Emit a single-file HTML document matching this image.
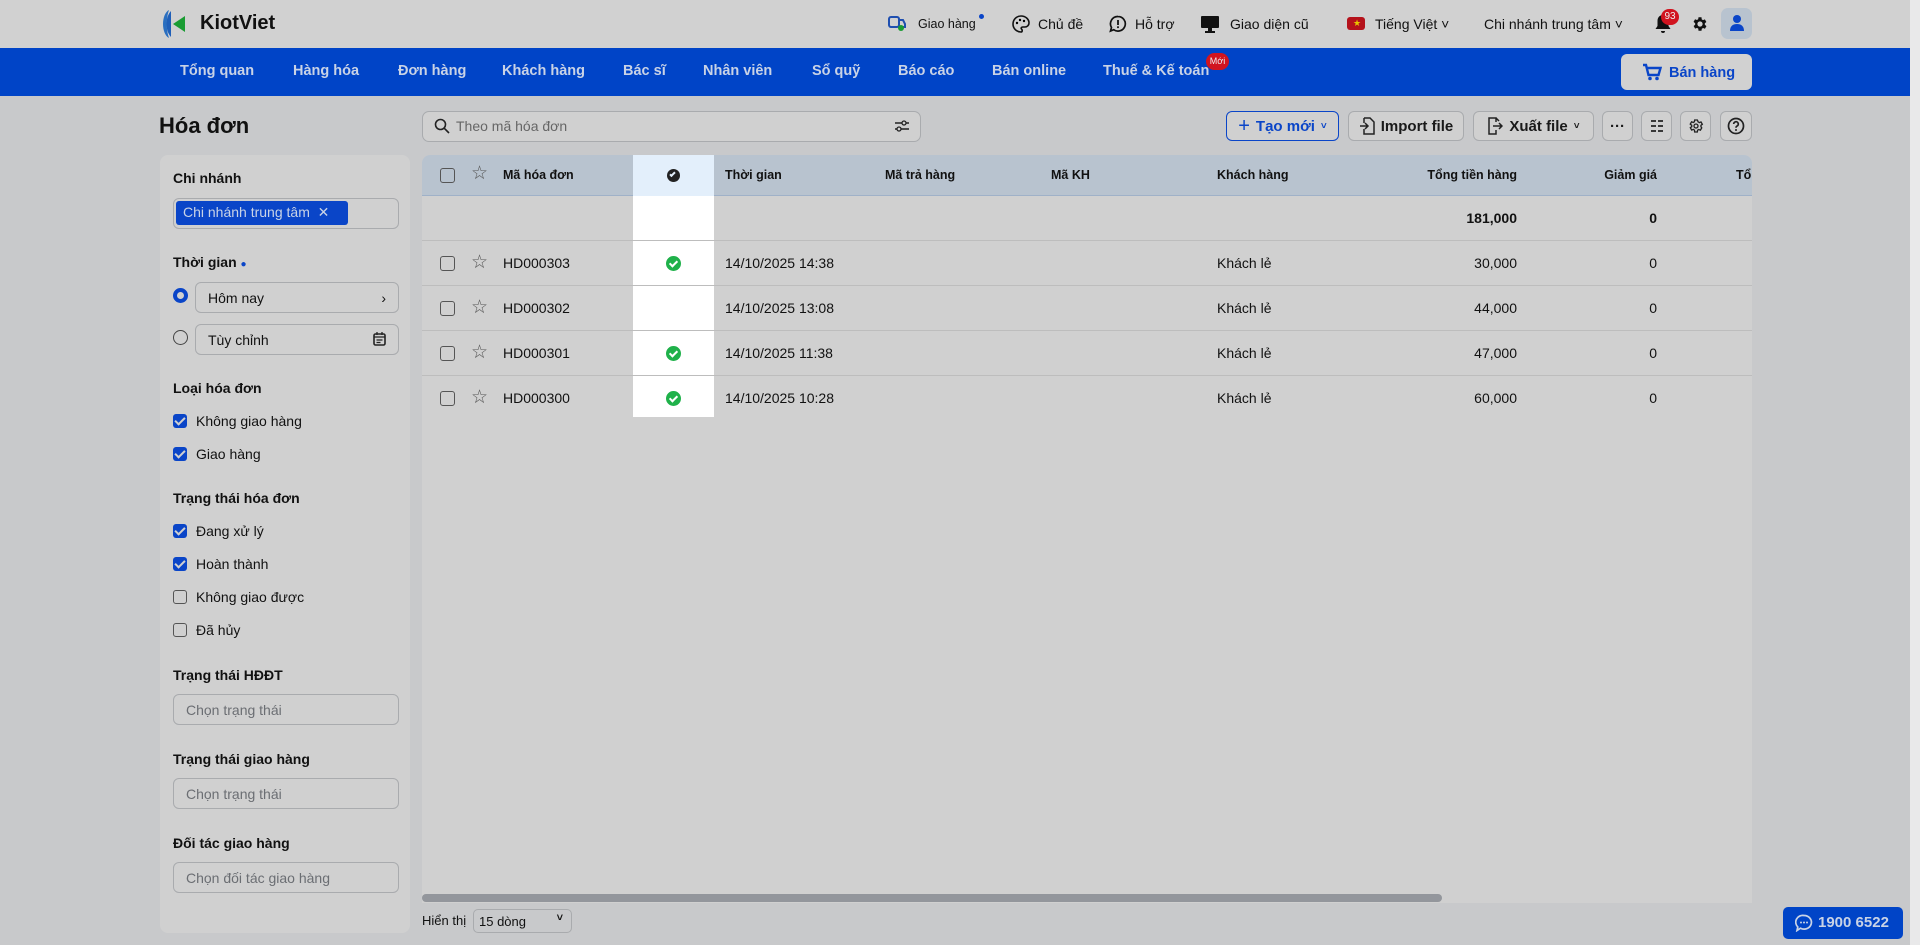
<!DOCTYPE html>
<html><head><meta charset="utf-8"><style>
*{box-sizing:border-box;margin:0;padding:0}
body{width:1920px;height:945px;overflow:hidden;background:#c8c9cb;font-family:"Liberation Sans",Arial,sans-serif;color:#111;position:relative;font-size:14px}
.a{position:absolute}
.top{left:0;top:0;width:1910px;height:48px;background:#d1d1d1}
.nav{left:0;top:48px;width:1910px;height:48px;background:#0044c7}
.nav span{position:absolute;top:15px;color:#c9d3e6;font-size:14.5px;font-weight:bold}
.strip{left:1910px;top:0;width:10px;height:945px;background:#e9e9ea}
.tt{font-size:14px;color:#111;top:16px}
.btn{border:1px solid #a9abae;border-radius:6px;height:30px;top:111px;background:#d0d0d0;font-size:15px;font-weight:bold;color:#1a1a1a;display:flex;align-items:center;justify-content:center;gap:6px}
.side{left:160px;top:155px;width:250px;height:778px;background:#d0d0d0;border-radius:8px}
.lab{left:13px;font-size:14px;font-weight:bold}
.inp{left:13px;width:226px;height:31px;border:1px solid #a9abae;border-radius:6px;color:#6b6e73;font-size:14px;padding:7px 12px}
.cb{left:13px;width:14px;height:14px;border-radius:3px;background:#0a45c8}
.cb:after{content:"";position:absolute;left:4px;top:1px;width:4px;height:8px;border:solid #d0d0d0;border-width:0 2px 2px 0;transform:rotate(45deg)}
.ce{left:13px;width:14px;height:14px;border-radius:3px;border:1.5px solid #555}
.ct{left:36px;font-size:14px}
.tbl{left:422px;top:155px;width:1330px;height:748px;background:#d0d0d0;border-radius:8px 8px 0 0;overflow:hidden}
.hd{left:0;top:0;width:1330px;height:41px;background:#b8c3cf;border-bottom:1px solid #9fb1c8}
.h{top:13px;font-size:12.5px;font-weight:bold}
.row{left:0;width:1330px;height:45px;border-bottom:1px solid #bdbdbd}
.row span{position:absolute;top:14px;font-size:14px}
.hl{left:211px;top:0;width:81px;height:262px;background:#fff}
.chk{width:15px;height:15px;border-radius:50%;background:#1fb14a;left:33px;top:15px}
.chk:after{content:"";position:absolute;left:5px;top:3px;width:3px;height:6px;border:solid #fff;border-width:0 2px 2px 0;transform:rotate(45deg)}
.rb{width:15px;height:15px;border:1.5px solid #555;border-radius:3px;left:18px;top:15px}
.st{left:49px;top:10px;font-size:19px;color:#555}
</style></head><body>
<div class="a top"></div>
<div class="a strip"></div>
<svg class="a" style="left:159px;top:8px" width="34" height="32" viewBox="0 0 34 32"><path d="M10 2 C2 6 2 26 10 30 C7 22 7 10 10 2Z" fill="#2a6fc0"/><path d="M12 3 C6 9 6 23 12 29 Z" fill="#1f5fb8"/><path d="M26 8 L14 16 L26 24Z" fill="#1a9c33"/></svg>
<div class="a" style="left:200px;top:12px;font-size:20px;font-weight:bold;color:#111">KiotViet</div>
<svg class="a" style="left:887px;top:14px" width="20" height="18" viewBox="0 0 20 18"><rect x="2" y="3" width="10" height="10" rx="2" fill="none" stroke="#1f4fb0" stroke-width="2"/><path d="M12 6h4l2 4v3h-6z" fill="none" stroke="#1f4fb0" stroke-width="2"/><circle cx="14" cy="14" r="3" fill="#1a9c33"/></svg>
<div class="a" style="left:918px;top:17px;font-size:12.5px">Giao hàng</div>
<div class="a" style="left:979px;top:14px;width:5px;height:5px;border-radius:50%;background:#0a45c8"></div>
<svg class="a" style="left:1012px;top:15px" width="18" height="18" viewBox="0 0 18 18"><path d="M9 1a8 8 0 1 0 0 16c1.5 0 1.5-2 .5-3-.8-.9 0-2 1.2-2H13a4 4 0 0 0 4-4c0-4-3.6-7-8-7z" fill="none" stroke="#111" stroke-width="1.6"/><circle cx="5" cy="8" r="1.2"/><circle cx="8" cy="5" r="1.2"/><circle cx="12" cy="6" r="1.2"/></svg>
<div class="a tt" style="left:1038px">Chủ đề</div>
<svg class="a" style="left:1109px;top:15px" width="18" height="18" viewBox="0 0 18 18"><path d="M9 1.5a7.3 7.3 0 1 1-4.3 13.2L1.5 16l1-3.5A7.3 7.3 0 0 1 9 1.5z" fill="none" stroke="#111" stroke-width="1.7"/><rect x="8.1" y="5" width="1.8" height="5" fill="#111"/><rect x="8.1" y="11.3" width="1.8" height="1.8" fill="#111"/></svg>
<div class="a tt" style="left:1135px">Hỗ trợ</div>
<svg class="a" style="left:1200px;top:14px" width="20" height="20" viewBox="0 0 20 20"><rect x="1" y="2" width="18" height="12" rx="1" fill="#111"/><rect x="8" y="14" width="4" height="3" fill="#111"/><rect x="5" y="17" width="10" height="2" fill="#111"/></svg>
<div class="a tt" style="left:1230px">Giao diện cũ</div>
<div class="a" style="left:1347px;top:17px;width:18px;height:13px;border-radius:3px;background:#b5121b"></div>
<div class="a" style="left:1353px;top:18px;color:#e8c500;font-size:9px">★</div>
<div class="a tt" style="left:1375px">Tiếng Việt ˅</div>
<div class="a tt" style="left:1484px">Chi nhánh trung tâm ˅</div>
<svg class="a" style="left:1654px;top:14px" width="18" height="20" viewBox="0 0 18 20"><path d="M9 1c-3.5 0-5.5 2.5-5.5 6v5L1.5 15h15l-2-3V7C14.5 3.5 12.5 1 9 1z" fill="#111"/><path d="M7 17a2 2 0 0 0 4 0z" fill="#111"/></svg>
<div class="a" style="left:1661px;top:9px;width:18px;height:16px;border-radius:8px;background:#d1141f;color:#eee;font-size:10px;text-align:center;line-height:16px">93</div>
<svg class="a" style="left:1691px;top:15px" width="18" height="18" viewBox="0 0 24 24"><path fill="#111" d="M19.4 13a7.5 7.5 0 0 0 0-2l2.1-1.6-2-3.5-2.5 1a7.5 7.5 0 0 0-1.7-1L15 3h-4l-.4 2.7a7.5 7.5 0 0 0-1.7 1l-2.5-1-2 3.5L6.6 11a7.5 7.5 0 0 0 0 2l-2.1 1.6 2 3.5 2.5-1a7.5 7.5 0 0 0 1.7 1L11 21h4l.4-2.7a7.5 7.5 0 0 0 1.7-1l2.5 1 2-3.5zM13 15.5a3.5 3.5 0 1 1 0-7 3.5 3.5 0 0 1 0 7z" transform="translate(-1 0)"/></svg>
<div class="a" style="left:1721px;top:8px;width:31px;height:31px;border-radius:7px;background:#b8c3cf"></div>
<svg class="a" style="left:1729px;top:14px" width="16" height="18" viewBox="0 0 16 18"><circle cx="8" cy="5" r="4" fill="#0a45c8"/><path d="M1 17c0-5 3-7 7-7s7 2 7 7z" fill="#0a45c8"/></svg>
<div class="a nav">
<span style="left:180px">Tổng quan</span><span style="left:293px">Hàng hóa</span><span style="left:398px">Đơn hàng</span><span style="left:502px">Khách hàng</span><span style="left:623px">Bác sĩ</span><span style="left:703px">Nhân viên</span><span style="left:812px">Sổ quỹ</span><span style="left:898px">Báo cáo</span><span style="left:992px">Bán online</span><span style="left:1103px">Thuế &amp; Kế toán</span>
<div class="a" style="left:1206px;top:5px;width:23px;height:17px;border-radius:9px;background:#d1141f;color:#eee;font-size:9px;text-align:center;line-height:17px">Mới</div>
<div class="a" style="left:1621px;top:6px;width:131px;height:36px;border-radius:6px;background:#d1d1d1"></div>
<svg class="a" style="left:1642px;top:15px" width="20" height="18" viewBox="0 0 20 18"><path d="M1 2h3l2.5 10h10l2-7H5.5" fill="none" stroke="#0a45c8" stroke-width="2.4"/><circle cx="8" cy="15.5" r="1.8" fill="#0a45c8"/><circle cx="15" cy="15.5" r="1.8" fill="#0a45c8"/></svg>
<span style="left:1669px;top:17px;color:#0a45c8">Bán hàng</span>
</div>
<div class="a" style="left:159px;top:113px;font-size:22px;font-weight:bold">Hóa đơn</div>
<div class="a" style="left:422px;top:111px;width:499px;height:31px;border:1px solid #a9abae;border-radius:7px;background:#d0d0d0"></div>
<svg class="a" style="left:434px;top:118px" width="16" height="16" viewBox="0 0 16 16"><circle cx="6.5" cy="6.5" r="5" fill="none" stroke="#222" stroke-width="1.6"/><path d="M10.3 10.3L15 15" stroke="#222" stroke-width="1.6"/></svg>
<div class="a" style="left:456px;top:118px;color:#666;font-size:14px">Theo mã hóa đơn</div>
<svg class="a" style="left:894px;top:118px" width="16" height="16" viewBox="0 0 16 16"><path d="M1 5h14M1 11h14" stroke="#222" stroke-width="1.4"/><circle cx="10" cy="5" r="2" fill="#d0d0d0" stroke="#222" stroke-width="1.3"/><circle cx="5" cy="11" r="2" fill="#d0d0d0" stroke="#222" stroke-width="1.3"/></svg>
<div class="a btn" style="left:1226px;width:113px;border-color:#0a45c8;color:#0a45c8"><span style="font-size:20px;font-weight:normal">+</span>Tạo mới <span style="font-size:10px">˅</span></div>
<div class="a btn" style="left:1348px;width:116px"><svg width="16" height="18" viewBox="0 0 16 18"><path d="M5 1h6l4 4v12H5v-5M5 6V1" fill="none" stroke="#222" stroke-width="1.5"/><path d="M1 9h8M6 6l3 3-3 3" fill="none" stroke="#222" stroke-width="1.5"/></svg>Import file</div>
<div class="a btn" style="left:1473px;width:121px"><svg width="16" height="18" viewBox="0 0 16 18"><path d="M9 5V1H2v16h7v-4M9 1l3 3" fill="none" stroke="#222" stroke-width="1.5"/><path d="M6 9h9M12 6l3 3-3 3" fill="none" stroke="#222" stroke-width="1.5"/></svg>Xuất file <span style="font-size:10px">˅</span></div>
<div class="a btn" style="left:1602px;width:31px">···</div>
<div class="a btn" style="left:1641px;width:31px"><svg width="14" height="14" viewBox="0 0 14 14"><path d="M1 2h5M8 2h5M1 7h5M8 7h5M1 12h5M8 12h5" stroke="#222" stroke-width="1.8"/></svg></div>
<div class="a btn" style="left:1680px;width:31px"><svg width="16" height="16" viewBox="0 0 24 24"><path fill="none" stroke="#222" stroke-width="2" d="M19.4 13a7.5 7.5 0 0 0 0-2l2.1-1.6-2-3.5-2.5 1a7.5 7.5 0 0 0-1.7-1L14 3h-4l-.4 2.7a7.5 7.5 0 0 0-1.700 1l-2.5-1-2 3.5L5.6 11a7.5 7.5 0 0 0 0 2l-2.1 1.6 2 3.5 2.5-1a7.5 7.5 0 0 0 1.7 1L10 21h4l.4-2.7a7.5 7.5 0 0 0 1.7-1l2.5 1 2-3.5z"/><circle cx="12" cy="12" r="3" fill="none" stroke="#222" stroke-width="2"/></svg></div>
<div class="a btn" style="left:1720px;width:32px"><svg width="18" height="18" viewBox="0 0 18 18"><circle cx="9" cy="9" r="7.5" fill="none" stroke="#222" stroke-width="1.7"/><path d="M6.7 7a2.3 2.3 0 1 1 3 2.2c-.6.3-.7.7-.7 1.5" fill="none" stroke="#222" stroke-width="1.7"/><circle cx="9" cy="13" r="1" fill="#222"/></svg></div>
<div class="a side">
<div class="a lab" style="top:15px">Chi nhánh</div>
<div class="a" style="left:13px;top:43px;width:226px;height:31px;border:1px solid #a9abae;border-radius:6px"></div>
<div class="a" style="left:16px;top:46px;width:172px;height:24px;border-radius:3px;background:#0a45c8;color:#c9d3e6;font-size:14px;padding:3px 7px">Chi nhánh trung tâm&nbsp; ✕</div>
<div class="a lab" style="top:99px">Thời gian <span style="color:#0a45c8;font-size:10px">●</span></div>
<div class="a" style="left:13px;top:133px;width:15px;height:15px;border-radius:50%;border:4px solid #0a45c8"></div>
<div class="a inp" style="left:35px;top:127px;width:204px;color:#111">Hôm nay<span style="float:right">›</span></div>
<div class="a" style="left:13px;top:175px;width:15px;height:15px;border-radius:50%;border:1.3px solid #444"></div>
<div class="a inp" style="left:35px;top:169px;width:204px;color:#111">Tùy chỉnh</div>
<svg class="a" style="left:213px;top:177px" width="13" height="14" viewBox="0 0 13 14"><rect x="1" y="2" width="11" height="11" rx="1.5" fill="none" stroke="#222" stroke-width="1.6"/><path d="M1 5h11M4 0v3M9 0v3M3.5 8h6M3.5 10.5h4" stroke="#222" stroke-width="1.3"/></svg>
<div class="a lab" style="top:225px">Loại hóa đơn</div>
<div class="a cb" style="top:259px"></div><div class="a ct" style="top:258px">Không giao hàng</div>
<div class="a cb" style="top:292px"></div><div class="a ct" style="top:291px">Giao hàng</div>
<div class="a lab" style="top:335px">Trạng thái hóa đơn</div>
<div class="a cb" style="top:369px"></div><div class="a ct" style="top:368px">Đang xử lý</div>
<div class="a cb" style="top:402px"></div><div class="a ct" style="top:401px">Hoàn thành</div>
<div class="a ce" style="top:435px"></div><div class="a ct" style="top:434px">Không giao được</div>
<div class="a ce" style="top:468px"></div><div class="a ct" style="top:467px">Đã hủy</div>
<div class="a lab" style="top:512px">Trạng thái HĐĐT</div>
<div class="a inp" style="top:539px">Chọn trạng thái</div>
<div class="a lab" style="top:596px">Trạng thái giao hàng</div>
<div class="a inp" style="top:623px">Chọn trạng thái</div>
<div class="a lab" style="top:680px">Đối tác giao hàng</div>
<div class="a inp" style="top:707px">Chọn đối tác giao hàng</div>
</div>
<div class="a tbl">
<div class="a hd"></div>
<div class="a hl"></div>
<div class="a" style="left:211px;top:0;width:81px;height:41px;background:#e3effb"></div>
<div class="a rb" style="top:13px"></div><div class="a st" style="top:7px">☆</div>
<div class="a h" style="left:81px">Mã hóa đơn</div>
<div class="a" style="left:245px;top:14px;width:13px;height:13px;border-radius:50%;background:#222"></div>
<div class="a" style="left:249px;top:16px;width:3px;height:6px;border:solid #e3effb;border-width:0 2px 2px 0;transform:rotate(45deg)"></div>
<div class="a h" style="left:303px">Thời gian</div>
<div class="a h" style="left:463px">Mã trả hàng</div>
<div class="a h" style="left:629px">Mã KH</div>
<div class="a h" style="left:795px">Khách hàng</div>
<div class="a h" style="left:1005px;width:90px;text-align:right">Tổng tiền hàng</div>
<div class="a h" style="left:1135px;width:100px;text-align:right">Giảm giá</div>
<div class="a h" style="left:1314px">Tổ</div>
<div class="a row" style="top:41px"><span style="left:1005px;width:90px;text-align:right;font-weight:bold">181,000</span><span style="left:1135px;width:100px;text-align:right;font-weight:bold">0</span></div>
<div class="a row" style="top:86px"><div class="a rb"></div><div class="a st">☆</div><span style="left:81px">HD000303</span><div class="a chk" style="left:244px"></div><span style="left:303px">14/10/2025 14:38</span><span style="left:795px">Khách lẻ</span><span style="left:1005px;width:90px;text-align:right">30,000</span><span style="left:1135px;width:100px;text-align:right">0</span></div>
<div class="a row" style="top:131px"><div class="a rb"></div><div class="a st">☆</div><span style="left:81px">HD000302</span><span style="left:303px">14/10/2025 13:08</span><span style="left:795px">Khách lẻ</span><span style="left:1005px;width:90px;text-align:right">44,000</span><span style="left:1135px;width:100px;text-align:right">0</span></div>
<div class="a row" style="top:176px"><div class="a rb"></div><div class="a st">☆</div><span style="left:81px">HD000301</span><div class="a chk" style="left:244px"></div><span style="left:303px">14/10/2025 11:38</span><span style="left:795px">Khách lẻ</span><span style="left:1005px;width:90px;text-align:right">47,000</span><span style="left:1135px;width:100px;text-align:right">0</span></div>
<div class="a row" style="top:221px;border-bottom:none"><div class="a rb"></div><div class="a st">☆</div><span style="left:81px">HD000300</span><div class="a chk" style="left:244px"></div><span style="left:303px">14/10/2025 10:28</span><span style="left:795px">Khách lẻ</span><span style="left:1005px;width:90px;text-align:right">60,000</span><span style="left:1135px;width:100px;text-align:right">0</span></div>
<div class="a" style="left:0;top:739px;width:1020px;height:8px;border-radius:4px;background:#93969c"></div>
</div>
<div class="a" style="left:422px;top:913px;font-size:13px">Hiển thị</div>
<div class="a" style="left:473px;top:909px;width:99px;height:24px;border:1px solid #a9abae;border-radius:5px;font-size:13px;padding:4px 5px">15 dòng<span style="position:absolute;right:8px;top:2px;font-size:11px;font-weight:bold">˅</span></div>
<div class="a" style="left:1783px;top:907px;width:120px;height:32px;border-radius:5px;background:#0044c7;color:#c9d3e6;font-weight:bold;font-size:15px;padding:7px 0 0 35px">1900 6522</div>
<svg class="a" style="left:1795px;top:914px" width="18" height="18" viewBox="0 0 18 18"><path d="M9 1.5a7.3 6.8 0 1 1-3.5 12.7L2 16.5l.8-3.5A7 6.8 0 0 1 9 1.5z" fill="none" stroke="#c9d3e6" stroke-width="1.7"/><circle cx="6" cy="8.5" r="1" fill="#c9d3e6"/><circle cx="9" cy="8.5" r="1" fill="#c9d3e6"/><circle cx="12" cy="8.5" r="1" fill="#c9d3e6"/></svg>
</body></html>
